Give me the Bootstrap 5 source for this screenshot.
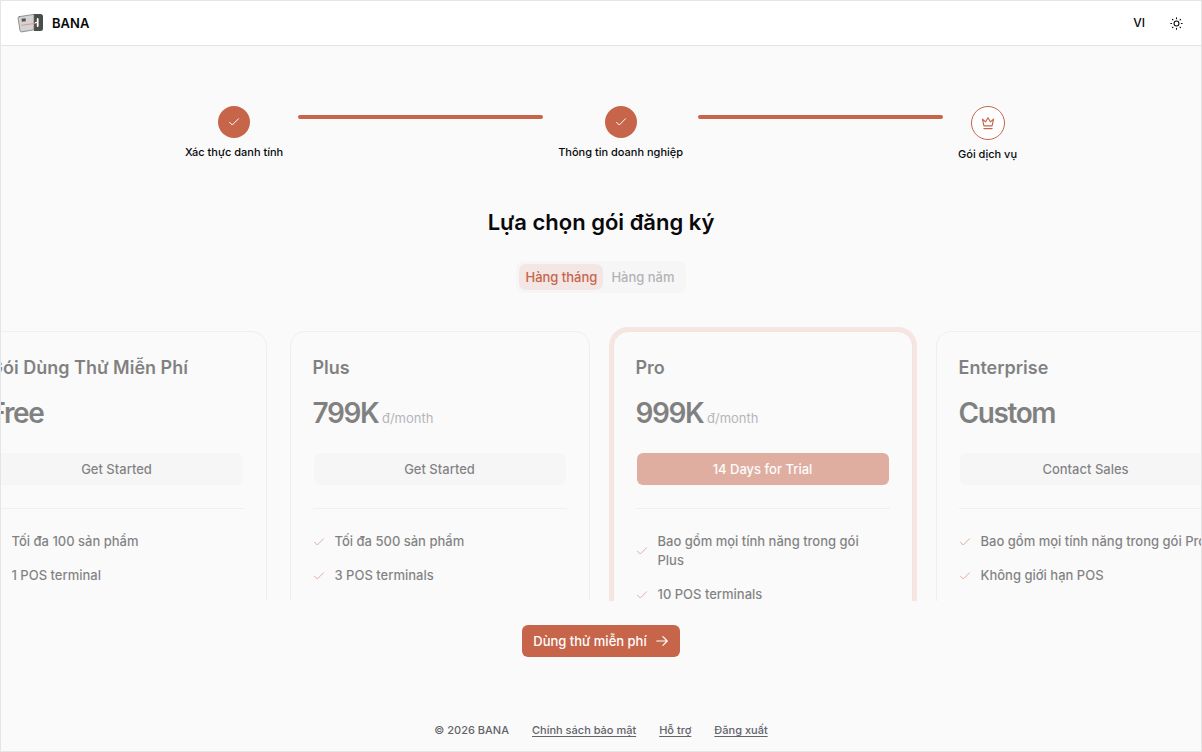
<!DOCTYPE html>
<html lang="vi">
<head>
<meta charset="utf-8">
<meta name="viewport" content="width=device-width, initial-scale=1">
<title>BANA</title>
<link rel="stylesheet" href="https://cdn.jsdelivr.net/npm/bootstrap@5.3.0/dist/css/bootstrap.min.css">
<style>
:root { --brand: #c6654a; --line: #e5e5e5; }
body { font-family: Inter, "Liberation Sans", sans-serif; font-size: 13px; line-height: 19px; color: #09090b; background: #fafafa; }
svg { flex: none; fill: none; stroke: currentColor; stroke-linecap: round; stroke-linejoin: round; }
.page { border: 1px solid var(--line); }
.topbar { height: 45px; padding: 0 14px 0 16px; background: #fff; border-bottom: 1px solid var(--line); }
.brand { font-size: 13px; font-weight: 600; gap: 8px; color: #09090b; }
.tool { padding: 4px; font-size: 12px; line-height: 16px; font-weight: 500; border: 0; background: none; color: #09090b; }
.topbar-tools { gap: 17px; }
.steps { max-width: 832px; width: 100%; gap: 15px; margin: 60px auto 0; padding: 0; }
.step { font-size: 11px; line-height: 16px; font-weight: 500; gap: 6px; }
.step-dot { width: 32px; height: 32px; border-radius: 50%; background: var(--brand); color: #fff; }
.step-current { width: 34px; height: 34px; background: #fff; color: var(--brand); border: 1px solid var(--brand); }
.step-line { height: 4px; border-radius: 2px; background: var(--brand); margin-top: 9px; }
.page-title { font-size: 22px; line-height: 30px; font-weight: 600; margin: 45px 0 0; }
.period { margin: 24px auto 0; padding: 3px; border-radius: 8px; background: #f6f6f7; }
.period .btn { --bs-btn-padding-x: 6px; --bs-btn-padding-y: 3px; --bs-btn-font-size: 13px; --bs-btn-font-weight: 500; --bs-btn-line-height: 20px; --bs-btn-border-width: 0; --bs-btn-border-radius: 7px; --bs-btn-color: #b3b3b6; }
.period .btn-check:checked + .btn { background: #f3e6e4; color: #c6654a; }
.period .period-wide { --bs-btn-padding-x: 8px; }
.plans { min-height: 120px; margin-top: 34px; padding-top: 4px; gap: 23px; }
.plan { flex: 0 0 300px; min-height: 480px; padding: 22px; border: 1px solid var(--line); border-radius: 15px; background: #fafafa; opacity: .5; }
.plan-pro { border-color: #f1cbc2; box-shadow: 0 0 0 4px #f3d1c7; }
.plan-name { font-size: 18px; line-height: 28px; font-weight: 600; margin: 0; }
.plan-price { font-size: 28px; line-height: 36px; font-weight: 600; letter-spacing: -.05em; margin: 13px 0 0; }
.plan-price small { font-size: 13px; line-height: 1; font-weight: 400; letter-spacing: 0; color: #71717a; margin-left: -2px; }
.btn-plan { --bs-btn-padding-y: 6px; --bs-btn-padding-x: 11px; --bs-btn-font-size: 13px; --bs-btn-font-weight: 500; --bs-btn-line-height: 20px; --bs-btn-border-width: 0; --bs-btn-border-radius: 6px; --bs-btn-bg: #f4f4f5; --bs-btn-color: #09090b; --bs-btn-hover-bg: #ececee; margin: 22px 1px 0; }
.btn-brand { --bs-btn-bg: var(--brand); --bs-btn-color: #fff; --bs-btn-hover-bg: #b55a41; --bs-btn-hover-color: #fff; }
.plan-list { margin: 23px 0 0; padding: 23px 0 0; border-top: 1px solid var(--line); gap: 15px; font-weight: 500; }
.plan-list li { gap: 10px; }
.plan-list svg { color: var(--brand); }
.btn-next { margin: 24px auto 0; gap: 8px; }
.foot { margin: 65px 0 12px; font-size: 11px; line-height: 17px; gap: 23px; color: #63636b; font-weight: 500; }
.foot a { color: inherit; text-underline-offset: 2px; }
</style>
</head>
<body>
<svg width="0" height="0" class="position-absolute" aria-hidden="true">
  <symbol id="check" viewBox="0 0 24 24"><path d="M21 5.500 8.500 18 3 12.500"/></symbol>
</svg>
<div class="page vh-100 d-flex flex-column">
  <header class="topbar d-flex align-items-center justify-content-between flex-shrink-0">
    <a href="#" class="brand d-flex align-items-center text-decoration-none">
      <svg width="27" height="20" viewBox="0 0 27 20" stroke="none" aria-hidden="true">
        <path d="M17 1h6.500a2.500 2.500 0 0 1 2.500 2.500v12a2.500 2.500 0 0 1-2.500 2.500H17z" fill="#4b4d4b" stroke="none"/>
        <path d="M2.300 3.600 17 1.400v15.400L4.700 18.900a1.500 1.500 0 0 1-1.700-1.300L1.100 5.300a1.500 1.500 0 0 1 1.200-1.700z" fill="#d3d3d3" stroke="#6a6d6a" stroke-width=".7"/>
        <path d="m4.500 5.700 4-.5.4 3-4 .5z" fill="#555" stroke="none"/>
        <path d="m4.800 12.200 14-1.900" stroke="#e09087" stroke-width=".9"/>
        <path d="M20.700 6v7" stroke="#fff" stroke-width="1.800"/>
        <path d="M18.500 9.500h2" stroke="#fff" stroke-width="1"/>
      </svg>
      BANA
    </a>
    <div class="topbar-tools d-flex align-items-center">
      <button type="button" class="tool">VI</button>
      <button type="button" class="tool d-flex" aria-label="Giao diện">
        <svg width="13" height="13" viewBox="0 0 24 24" stroke-width="2"><circle cx="12" cy="12" r="4.500"/><path d="M12 1.500v1.500M12 21v1.500M1.500 12H3M21 12h1.500M4.500 4.500l1 1M18.500 18.500l1 1M4.500 19.500l1-1M18.500 5.500l1-1"/></svg>
      </button>
    </div>
  </header>

  <ol class="steps d-flex list-unstyled flex-shrink-0">
    <li class="step d-flex flex-column align-items-center"><span class="step-dot d-flex align-items-center justify-content-center"><svg width="12" height="12" stroke-width="2"><use href="#check"/></svg></span>Xác thực danh tính</li>
    <li class="step-line flex-fill" aria-hidden="true"></li>
    <li class="step d-flex flex-column align-items-center"><span class="step-dot d-flex align-items-center justify-content-center"><svg width="12" height="12" stroke-width="2"><use href="#check"/></svg></span>Thông tin doanh nghiệp</li>
    <li class="step-line flex-fill" aria-hidden="true"></li>
    <li class="step d-flex flex-column align-items-center" aria-current="step"><span class="step-dot step-current d-flex align-items-center justify-content-center"><svg width="14" height="14" viewBox="0 0 24 24" stroke-width="2"><path d="M5 17 2.500 5.500 8 10l4-7 4 7 5.500-4.500L19 17zM5 21.500h14"/></svg></span>Gói dịch vụ</li>
  </ol>

  <h1 class="page-title text-center">Lựa chọn gói đăng ký</h1>

  <div class="period d-flex flex-shrink-0" role="group" aria-label="Chu kỳ">
    <input class="btn-check" type="radio" name="period" id="monthly" checked>
    <label class="btn" for="monthly">Hàng tháng</label>
    <input class="btn-check" type="radio" name="period" id="yearly">
    <label class="btn period-wide" for="yearly">Hàng năm</label>
  </div>

  <main class="plans d-flex justify-content-center align-items-start overflow-hidden flex-fill">
    <section class="plan">
      <h2 class="plan-name">Gói Dùng Thử Miễn Phí</h2>
      <p class="plan-price">Free</p>
      <div class="d-grid"><button type="button" class="btn btn-plan">Get Started</button></div>
      <ul class="plan-list list-unstyled d-flex flex-column">
        <li class="d-flex align-items-center"><svg width="12" height="12" stroke-width="2"><use href="#check"/></svg>Tối đa 100 sản phẩm</li>
        <li class="d-flex align-items-center"><svg width="12" height="12" stroke-width="2"><use href="#check"/></svg>1 POS terminal</li>
      </ul>
    </section>
    <section class="plan">
      <h2 class="plan-name">Plus</h2>
      <p class="plan-price">799K <small>đ/month</small></p>
      <div class="d-grid"><button type="button" class="btn btn-plan">Get Started</button></div>
      <ul class="plan-list list-unstyled d-flex flex-column">
        <li class="d-flex align-items-center"><svg width="12" height="12" stroke-width="2"><use href="#check"/></svg>Tối đa 500 sản phẩm</li>
        <li class="d-flex align-items-center"><svg width="12" height="12" stroke-width="2"><use href="#check"/></svg>3 POS terminals</li>
      </ul>
    </section>
    <section class="plan plan-pro">
      <h2 class="plan-name">Pro</h2>
      <p class="plan-price">999K <small>đ/month</small></p>
      <div class="d-grid"><button type="button" class="btn btn-plan btn-brand">14 Days for Trial</button></div>
      <ul class="plan-list list-unstyled d-flex flex-column">
        <li class="d-flex align-items-center"><svg width="12" height="12" stroke-width="2"><use href="#check"/></svg><span>Bao gồm mọi tính năng trong gói <br>Plus</span></li>
        <li class="d-flex align-items-center"><svg width="12" height="12" stroke-width="2"><use href="#check"/></svg>10 POS terminals</li>
      </ul>
    </section>
    <section class="plan">
      <h2 class="plan-name">Enterprise</h2>
      <p class="plan-price">Custom</p>
      <div class="d-grid"><button type="button" class="btn btn-plan">Contact Sales</button></div>
      <ul class="plan-list list-unstyled d-flex flex-column">
        <li class="d-flex align-items-center text-nowrap"><svg width="12" height="12" stroke-width="2"><use href="#check"/></svg>Bao gồm mọi tính năng trong gói Pro</li>
        <li class="d-flex align-items-center"><svg width="12" height="12" stroke-width="2"><use href="#check"/></svg>Không giới hạn POS</li>
      </ul>
    </section>
  </main>

  <button type="button" class="btn btn-plan btn-brand btn-next d-flex align-items-center flex-shrink-0">Dùng thử miễn phí
    <svg width="14" height="14" viewBox="0 0 24 24" stroke-width="2"><path d="M3 12h18M13.500 4.500 21 12l-7.500 7.500"/></svg>
  </button>

  <footer class="foot d-flex justify-content-center flex-shrink-0">
    <span>© 2026 BANA</span>
    <a href="#">Chính sách bảo mật</a>
    <a href="#">Hỗ trợ</a>
    <a href="#">Đăng xuất</a>
  </footer>
</div>
<script src="https://cdn.jsdelivr.net/npm/bootstrap@5.3.0/dist/js/bootstrap.bundle.min.js"></script>
</body>
</html>
